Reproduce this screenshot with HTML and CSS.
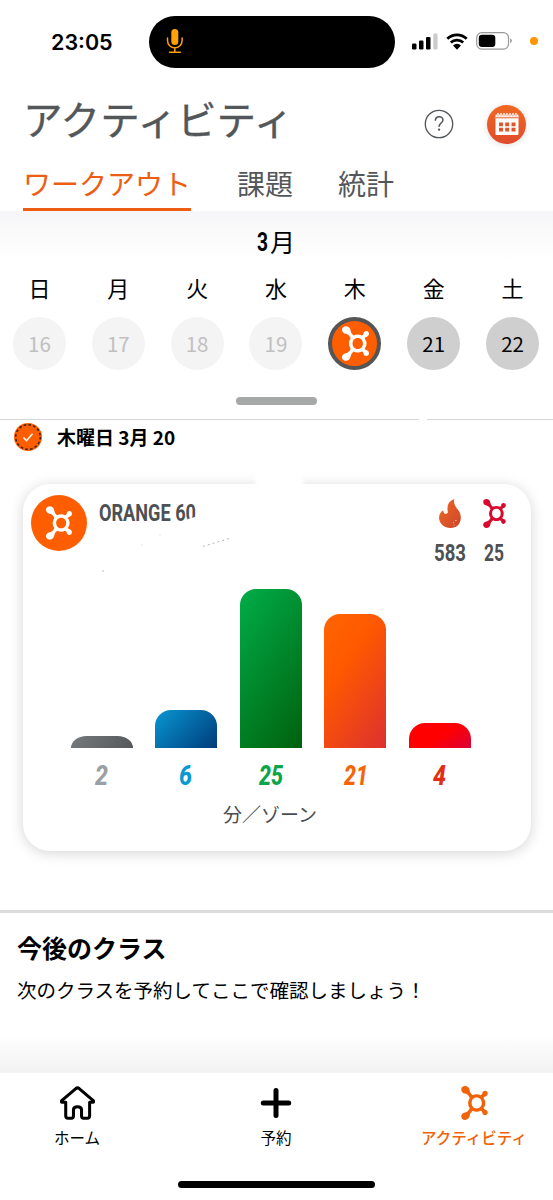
FILE: index.html
```html
<!DOCTYPE html>
<html lang="ja">
<head>
<meta charset="utf-8">
<title>アクティビティ</title>
<link rel="stylesheet" href="styles.css">
</head>
<body>
<svg class="defs" width="0" height="0">
  <defs>
    <symbol id="splat" viewBox="0 0 78 100">
      <path fill-rule="evenodd" fill="currentColor" d="M11 0C19 0 24 6 25 13C26 19 29 23 34 27Q39 24 45 24Q52 24 57 27Q61 26 62 22C62 17 66 14 70 14C75 14 78 18 78 22C78 27 74 30 70 31Q66 32 66 36Q71 42 71 50Q71 58 66 64Q66 68 70 69C74 70 78 73 78 78C78 82 75 86 70 86C66 86 62 83 62 78Q61 74 57 73Q52 76 45 76Q39 76 34 73C29 77 26 81 25 87C24 94 19 100 11 100C5 100 0 96 0 90C0 83 5 79 11 78C18 77 22 72 25 65Q20 58 20 50Q20 42 25 35C22 28 18 23 11 22C5 21 0 17 0 10C0 4 5 0 11 0ZM45.500 34C36 34 30.500 41 30.500 50C30.500 59 36 66 45.500 66C55 66 60.500 59 60.500 50C60.500 41 55 34 45.500 34Z"/>
    </symbol>
  </defs>
</svg>
<main class="screen">
  <header class="status">
    <div class="clock">23:05</div>
    <div class="island">
      <svg width="18" height="26" viewBox="0 0 18 26"><rect x="5.300" y="1" width="7" height="16" rx="3.500" fill="#ff9f0a"/><path d="M1.500 10v2.500a7.300 7.300 0 0 0 14.600 0V10M8.800 20v4M3.500 24.200h10.800" fill="none" stroke="#ff9f0a" stroke-width="1.500" stroke-linecap="round"/></svg>
    </div>
    <div class="signals">
      <svg width="26" height="17" viewBox="0 0 26 17"><rect x="0" y="10.500" width="4.500" height="6" rx="1.200"/><rect x="7" y="7.500" width="4.500" height="9" rx="1.200"/><rect x="14" y="4" width="4.500" height="12.500" rx="1.200"/><rect x="21.300" y="0.500" width="4.300" height="16" rx="1.200" fill="#ccc"/></svg>
      <svg width="22" height="17" viewBox="0 0 22 17"><path d="M1.300 5.700a14 14 0 0 1 19.400 0M4.800 9.600a9 9 0 0 1 12.400 0" fill="none" stroke="#000" stroke-width="2.800"/><path d="M7 12.400a6 6 0 0 1 8 0L11 16.700z"/></svg>
      <svg width="37" height="18" viewBox="0 0 37 18"><rect x="0.700" y="0.700" width="31.800" height="16.400" rx="5" fill="none" stroke="#999" stroke-width="1.200"/><rect x="2.800" y="2.800" width="16.500" height="12.200" rx="3.200"/><path d="M34.300 6v5.500q3-2.700 0-5.500z" fill="#888"/></svg>
      <i class="dot"></i>
    </div>
  </header>

  <section class="heading">
    <h1 class="title">アクティビティ</h1>
    <svg class="help" width="30" height="30" viewBox="0 0 30 30"><circle cx="15" cy="15" r="13.700" fill="none" stroke="#505457" stroke-width="1.300"/><path d="M11.300 11.800c0-5.600 7.900-5.200 7.700-.8c-.2 3-3.900 3.200-3.900 6.700" fill="none" stroke="#505457" stroke-width="1.500"/><circle cx="15.100" cy="20.700" r="1.100" fill="#505457"/></svg>
    <div class="calendar">
      <svg width="24" height="24" viewBox="0 0 24 24"><path d="M1.500 2.500h21a1 1 0 0 1 1 1V22q0 1-1 1h-21q-1 0-1-1V3.500q0-1 1-1z" fill="#fff"/><path d="M.5 5.800h23" stroke="#e85a28" stroke-width="1"/><path d="M3 4.300V1.200M6 4.300V1.200M9 4.300V1.200M12 4.300V1.200M15 4.300V1.200M18 4.300V1.200M21 4.300V1.200" stroke="#e85a28" stroke-width="2.200"/><path d="M3 4.500V1M6 4.500V1M9 4.500V1M12 4.500V1M15 4.500V1M18 4.500V1M21 4.500V1" stroke="#fff" stroke-width="1.400"/><path d="M4 10.500h4v3.800H4zM10.200 10.500h4v3.800h-4zM16.500 10.500h4v3.800h-4zM4 15.800h4v3.800H4zM10.200 15.800h4v3.800h-4zM16.500 15.800h4v3.800h-4z" fill="#e45428"/></svg>
    </div>
  </section>
  <nav class="tabs"><a class="tab active">ワークアウト</a><a class="tab">課題</a><a class="tab">統計</a></nav>

  <section class="week">
    <div class="month"><svg width="14" height="36"><text class="num" x="2" y="27.500" font-size="26" textLength="11" lengthAdjust="spacingAndGlyphs">3</text></svg><span>月</span></div>
    <div class="days">
      <div class="day"><b>日</b><i class="past">16</i></div>
      <div class="day"><b>月</b><i class="past">17</i></div>
      <div class="day"><b>火</b><i class="past">18</i></div>
      <div class="day"><b>水</b><i class="past">19</i></div>
      <div class="day"><b>木</b><i class="today"><svg width="27" height="35"><use href="#splat"/></svg></i></div>
      <div class="day"><b>金</b><i>21</i></div>
      <div class="day"><b>土</b><i>22</i></div>
    </div>
    <div class="handle"></div>
    <div class="rule"><span></span><span></span></div>
  </section>

  <section class="date">
    <svg width="28" height="28" viewBox="0 0 28 28"><circle cx="14" cy="14" r="14" fill="#ff5e00"/><circle cx="14" cy="14" r="12.300" fill="none" stroke="#382018" stroke-width="1.500" stroke-dasharray="2.700 2.130"/><path d="M9.500 14.500l3 3.200 6-7" fill="none" stroke="#fff" stroke-width="1.500"/></svg>
    <h2>木曜日 3月 20</h2>
  </section>

  <article class="card">
    <div class="fade"></div>
    <div class="summary">
      <div class="logo"><svg width="26" height="34"><use href="#splat"/></svg></div>
      <svg class="class-name" width="160" height="84" viewBox="0 0 160 84"><text class="num" x="0" y="32" font-size="24.500" textLength="97" lengthAdjust="spacingAndGlyphs">ORANGE 60</text><path d="M86.500 32L90 29.500L98 27.500V36H86.500z" fill="#fff"/><path d="M104 57.500l26-8" stroke="#999" stroke-width=".7" stroke-dasharray="2 3"/><path d="M3 82h2" stroke="#bbb"/><path d="M42 56h2M60 46h2" stroke="#e4e4e4"/></svg>
      <div class="stat">
        <svg width="22" height="29" viewBox="0 0 64 86"><defs><linearGradient id="fire" x2="1" y2="1"><stop stop-color="#f06a22"/><stop offset="1" stop-color="#cb452d"/></linearGradient></defs><path fill="url(#fire)" d="M45 0C40 14 51 25 58 35C69 52 65 76 46 84C25 91 3 79 0 60C-2 47 4 38 12 33C12 40 16 45 20 44C31 43 21 33 26 18C29 8 36 3 45 0Z"/><path d="M42 70h2M48 64h3M43 77h2" stroke="#ffd7b3" stroke-width="3"/></svg>
        <svg width="34" height="36"><text class="num" x="1" y="25" font-size="24.500" textLength="32" lengthAdjust="spacingAndGlyphs">583</text></svg>
      </div>
      <div class="stat second">
        <svg class="red" width="23" height="29"><use href="#splat"/></svg>
        <svg width="24" height="36"><text class="num" x="2" y="25" font-size="24.500" textLength="20" lengthAdjust="spacingAndGlyphs">25</text></svg>
      </div>
    </div>
    <div class="bars">
      <i class="bar gray" style="height:12.500px"></i><i class="bar blue" style="height:38px"></i><i class="bar green" style="height:159px"></i><i class="bar orange" style="height:134px"></i><i class="bar crimson" style="height:25.500px"></i>
    </div>
    <div class="values">
      <svg viewBox="0 0 62 34"><text class="zone" fill="#9ba0a4" x="24" y="24" textLength="13" lengthAdjust="spacingAndGlyphs">2</text></svg>
      <svg viewBox="0 0 62 34"><text class="zone" fill="#0899d0" x="24" y="24" textLength="13" lengthAdjust="spacingAndGlyphs">6</text></svg>
      <svg viewBox="0 0 62 34"><text class="zone" fill="#09a548" x="19" y="24" textLength="24" lengthAdjust="spacingAndGlyphs">25</text></svg>
      <svg viewBox="0 0 62 34"><text class="zone" fill="#f76408" x="20" y="24" textLength="24" lengthAdjust="spacingAndGlyphs">21</text></svg>
      <svg viewBox="0 0 62 34"><text class="zone" fill="#e32d12" x="24" y="24" textLength="13" lengthAdjust="spacingAndGlyphs">4</text></svg>
    </div>
    <div class="unit">分／ゾーン</div>
  </article>

  <section class="upcoming">
    <h2>今後のクラス</h2>
    <p>次のクラスを予約してここで確認しましょう！</p>
  </section>

  <nav class="bottom">
    <a class="item home"><svg width="35" height="34" viewBox="0 0 104 100"><path d="M5 43L47 7Q52 3 57 7L99 43Q102 47 97 48H88V88Q88 95 81 95H70Q64 95 64 88V70Q64 61 52 61Q40 61 40 70V88Q40 95 34 95H24Q17 95 17 88V48H7Q2 47 5 43Z" fill="none" stroke="#000" stroke-width="9" stroke-linejoin="round"/></svg><span>ホーム</span></a>
    <a class="item book"><svg width="32" height="34" viewBox="0 0 32 34"><path d="M16 4.500v25M3.300 17h25.400" stroke="#000" stroke-width="5" stroke-linecap="round"/></svg><span>予約</span></a>
    <a class="item current"><svg width="27" height="34"><use href="#splat"/></svg><span>アクティビティ</span></a>
  </nav>
  <div class="indicator"></div>
</main>
</body>
</html>
```

FILE: styles.css
```css
* { box-sizing: border-box; }
body { margin: 0; background: #fff; color: #000; font-family: "Noto Sans CJK JP", sans-serif; }
h1, h2, p { margin: 0; }
i, b { font-style: normal; font-weight: 400; }
svg { display: block; flex: none; }
.defs { position: absolute; }
.screen { width: 553px; height: 1200px; overflow: hidden; display: flex; flex-direction: column; }
.screen > * { flex: none; }

.status { height: 84px; padding-top: 16px; display: flex; }
.clock { width: 149px; padding-left: 51px; font: 600 21.5px/52px Inter, sans-serif; }
.island { width: 246px; height: 52px; border-radius: 26px; background: #000; padding: 12px 17px; }
.signals { display: flex; align-items: center; padding-left: 17px; height: 50px; }
.signals svg:nth-child(2) { margin-left: 8px; }
.signals svg:nth-child(3) { margin-left: 8px; }
.dot { width: 8px; height: 8px; border-radius: 50%; background: #ff9500; margin-left: 17px; }

.heading { height: 76px; display: flex; align-items: center; padding: 0 27px 0 23px; }
.title { font-size: 39.600px; font-weight: 400; line-height: 66px; color: #53575a; -webkit-text-stroke: .3px #53575a; flex: 1; padding-bottom: 8px; }
.help { margin: 4px 33px 0 0; }
.calendar { width: 39px; height: 39px; margin-top: 4px; border-radius: 50%; background: linear-gradient(#f06a22, #df4b2b); display: grid; place-items: center; box-shadow: 0 1px 6px #0002; }
.tabs { height: 51px; display: flex; padding-left: 23px; }
.tab { font-size: 28px; line-height: 47px; color: #53575a; margin-right: 45px; height: 51px; }
.tab.active { width: 168px; margin-right: 46px; color: #ee5e12; border-bottom: 3px solid #ee5e12; }

.week { height: 209px; background: linear-gradient(#f6f6f8, #fff 50px); }
.month { height: 61px; display: flex; justify-content: center; align-items: center; gap: 1px; padding: 0 3px 2px 0; font-size: 25px; line-height: 30px; }
.days { width: 552px; display: grid; grid-template-columns: repeat(7, 1fr); }
.day { display: flex; flex-direction: column; align-items: center; }
.day b { font-size: 22px; line-height: 30px; }
.day i { width: 53px; height: 53px; margin-top: 15px; border-radius: 50%; display: grid; place-items: center; background: #cfcfcf; font-size: 20.5px; line-height: 53px; }
.day .past { background: #f4f4f4; color: #c0c0c0; }
.day .today { background: #ff5e00; border: 4px solid #555; color: #fff; padding-left: 1px; }
.handle { width: 81px; height: 8px; border-radius: 4px; background: #a7a9a9; margin: 27px auto 0; }
.rule { display: flex; justify-content: space-between; margin-top: 13.500px; }
.rule span { height: 1.500px; background: #d6d6d8; width: 126px; }
.rule span:first-child { width: 419px; }

.date { height: 64px; padding: 3px 14px; display: flex; gap: 15px; }
.date h2 { font-size: 19px; line-height: 27px; font-weight: 700; }

.card { position: relative; width: 508px; height: 367px; margin-left: 23px; border-radius: 27px; background: #fff; box-shadow: 0 2px 14px #0000002b; }
.fade { position: absolute; left: 234px; top: -18px; width: 44px; height: 20px; background: #fff; border-radius: 50% 50% 0 0; box-shadow: 0 0 5px 2px #fff; }
.summary { height: 105px; display: flex; position: relative; }
.logo { width: 56px; height: 56px; margin: 11px 0 0 8px; border-radius: 50%; background: #ff5e00; color: #fff; display: grid; place-items: center; }
.class-name { margin: 5px 0 0 12px; }
.num { font-family: Roboto, sans-serif; font-weight: 700; fill: #4d5154; }
.month .num { fill: #000; }
.stat { width: 34px; margin: 15px 0 0 174px; display: flex; flex-direction: column; align-items: center; gap: 8px; }
.stat.second { width: 24px; margin-left: 15px; }
.red { color: #d9082d; }
.bars { height: 159px; padding-left: 47.700px; display: flex; gap: 22.600px; align-items: flex-end; }
.bar { width: 62px; border-radius: 16px 16px 0 0; }
.gray { background: linear-gradient(120deg, #777a7d, #54585a); border-radius: 16px 16px 0 0 / 12.500px 12.500px 0 0; }
.blue { background: linear-gradient(135deg, #0897d1, #003b7b); }
.green { background: linear-gradient(125deg, #00ad49, #00610d); }
.orange { background: linear-gradient(125deg, #ff6500, #ff5900 35%, #dc3030); }
.crimson { background: linear-gradient(145deg, #f00 50%, #dc0038); }
.values { display: flex; gap: 22.600px; padding: 13px 0 0 47.700px; }
.values svg { width: 62px; height: 34px; }
.zone { font: italic 800 27px Roboto, sans-serif; }
.unit { text-align: center; padding-right: 14px; margin-top: 4px; font-size: 19px; line-height: 30px; color: #494d50; }

.upcoming { margin-top: 59px; height: 163px; border-top: 3px solid #dcdcdc; padding: 19px 17px 0; background: linear-gradient(#fff 120px, #f2f2f3); }
.upcoming h2 { font-size: 25px; line-height: 30px; }
.upcoming p { font-size: 19.500px; line-height: 30px; margin-top: 13px; white-space: nowrap; }

.bottom { height: 108px; background: #fff; display: flex; justify-content: space-between; padding: 13px 24px 0 53px; }
.item { display: flex; flex-direction: column; align-items: center; font-size: 15.500px; line-height: 24px; gap: 5px; }
.home { width: 48px; }
.book { width: 34px; margin-left: 32px; }
.current { width: 110px; color: #f16308; font-weight: 500; }
.indicator { width: 197px; height: 7px; border-radius: 4px; background: #000; margin: .4px 0 0 178px; }
```
